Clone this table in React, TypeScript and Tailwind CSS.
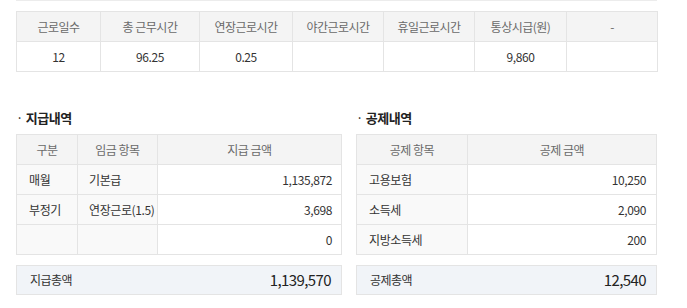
import React from 'react';

const FONT = { fontFamily: '"Noto Sans CJK KR", "Noto Sans", sans-serif' };

const workCols = [
  { label: '근로일수', value: '12', w: 'w-[84px]' },
  { label: '총 근무시간', value: '96.25', w: 'w-[99px]' },
  { label: '연장근로시간', value: '0.25', w: 'w-[93px]' },
  { label: '야간근로시간', value: '', w: 'w-[91px]' },
  { label: '휴일근로시간', value: '', w: 'w-[91px]' },
  { label: '통상시급(원)', value: '9,860', w: 'w-[92px]' },
  { label: '-', value: '', w: 'w-[91px]' },
];

const payRows = [
  { kind: '매월', item: '기본급', amount: '1,135,872' },
  { kind: '부정기', item: '연장근로(1.5)', amount: '3,698' },
  { kind: '', item: '', amount: '0' },
];

const deductRows = [
  { item: '고용보험', amount: '10,250' },
  { item: '소득세', amount: '2,090' },
  { item: '지방소득세', amount: '200' },
];

const th =
  'h-[30px] border border-[#e4e4e4] bg-[#f4f4f4] text-center font-normal text-[#6a6a6a] text-[12px] tracking-[-0.5px] whitespace-nowrap';
const td = 'h-[30px] border border-[#e4e4e4] text-[12px] text-[#333] tracking-[-0.4px] whitespace-nowrap';

function SectionTitle({ text }: { text: string }) {
  return (
    <div className="mb-[7px] h-[18px] text-[13px] font-bold leading-[18px] tracking-[-0.5px] text-[#222]">
      <span className="mr-[3px] font-normal">·</span>
      {text}
    </div>
  );
}

function TotalBox({ label, amount }: { label: string; amount: string }) {
  return (
    <div className="mt-[10px] flex h-[30px] items-center justify-between border border-[#e4e4e4] bg-[#f1f4f8] pl-[13px] pr-[10px]">
      <span className="text-[12px] tracking-[-0.5px] text-[#333]">{label}</span>
      <span className="text-[15px] tracking-[-0.6px] text-[#222]">{amount}</span>
    </div>
  );
}

export default function App() {
  return (
    <div className="h-[308px] w-[687px] bg-white pl-[16px]" style={FONT}>
      <div className="h-[1px] w-[641px] bg-[#ececec]" />
      <table className="mt-[10px] w-[641px] table-fixed border-collapse">
        <thead>
          <tr>
            {workCols.map((c) => (
              <th key={c.label} className={`${th} ${c.w}`}>
                {c.label}
              </th>
            ))}
          </tr>
        </thead>
        <tbody>
          <tr>
            {workCols.map((c) => (
              <td key={c.label} className={`${td} text-center`}>
                {c.value}
              </td>
            ))}
          </tr>
        </tbody>
      </table>

      <div className="mt-[37px] flex gap-[14px]">
        <div className="w-[326px]">
          <SectionTitle text="지급내역" />
          <table className="w-full table-fixed border-collapse">
            <thead>
              <tr>
                <th className={`${th} w-[61px]`}>구분</th>
                <th className={`${th} w-[80px]`}>임금 항목</th>
                <th className={th}>지급 금액</th>
              </tr>
            </thead>
            <tbody>
              {payRows.map((r, idx) => (
                <tr key={`pay-${idx}`}>
                  <td className={`${td} bg-[#f9f9f9] pl-[12px]`}>{r.kind}</td>
                  <td className={`${td} bg-[#f9f9f9] pl-[11px]`}>{r.item}</td>
                  <td className={`${td} pr-[9px] text-right`}>{r.amount}</td>
                </tr>
              ))}
            </tbody>
          </table>
          <TotalBox label="지급총액" amount="1,139,570" />
        </div>

        <div className="w-[301px]">
          <SectionTitle text="공제내역" />
          <table className="w-full table-fixed border-collapse">
            <thead>
              <tr>
                <th className={`${th} w-[111px]`}>공제 항목</th>
                <th className={th}>공제 금액</th>
              </tr>
            </thead>
            <tbody>
              {deductRows.map((r) => (
                <tr key={r.item}>
                  <td className={`${td} bg-[#f9f9f9] pl-[12px]`}>{r.item}</td>
                  <td className={`${td} pr-[10px] text-right`}>{r.amount}</td>
                </tr>
              ))}
            </tbody>
          </table>
          <TotalBox label="공제총액" amount="12,540" />
        </div>
      </div>
    </div>
  );
}
